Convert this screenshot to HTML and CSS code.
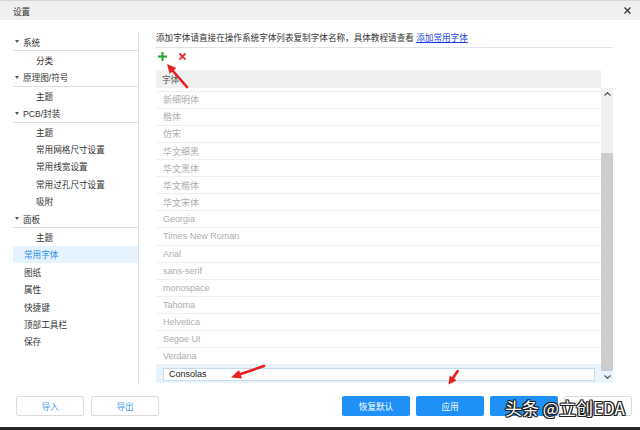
FILE: index.html
```html
<!DOCTYPE html>
<html lang="zh-CN">
<head>
<meta charset="utf-8">
<title>设置</title>
<link rel="stylesheet" href="styles.css">
</head>
<body>
<div class="window">
  <header class="titlebar">
    <span class="title">设置</span>
    <svg class="close" width="7" height="7" viewBox="0 0 7 7"><path d="M0.5 0.5L6.5 6.5M6.5 0.5L0.5 6.5"/></svg>
  </header>
  <div class="main">
    <nav class="tree">
      <div class="row group"><i class="caret"></i>系统</div>
      <div class="row child">分类</div>
      <div class="row group"><i class="caret"></i>原理图/符号</div>
      <div class="row child">主题</div>
      <div class="row group"><i class="caret"></i>PCB/封装</div>
      <div class="row child">主题</div>
      <div class="row child">常用网格尺寸设置</div>
      <div class="row child">常用线宽设置</div>
      <div class="row child">常用过孔尺寸设置</div>
      <div class="row child">吸附</div>
      <div class="row group"><i class="caret"></i>面板</div>
      <div class="row child">主题</div>
      <div class="row leaf active">常用字体</div>
      <div class="row leaf">图纸</div>
      <div class="row leaf">属性</div>
      <div class="row leaf">快捷键</div>
      <div class="row leaf">顶部工具栏</div>
      <div class="row leaf">保存</div>
    </nav>
    <section class="content">
      <div class="hint">添加字体请直接在操作系统字体列表复制字体名称，具体教程请查看 <a href="#">添加常用字体</a></div>
      <div class="toolbar">
        <svg class="icon-add" width="9" height="9" viewBox="0 0 9 9"><path d="M4.5 0V9M0 4.5H9"/></svg>
        <svg class="icon-del" width="7" height="7" viewBox="0 0 7 7"><path d="M0.5 0.5L6.5 6.5M6.5 0.5L0.5 6.5"/></svg>
      </div>
      <div class="table">
        <div class="thead"><div class="th">字体</div><div class="th-gap"></div></div>
        <div class="tbody">
          <div class="rows">
            <div class="cut"></div>
            <div class="td">新细明体</div>
            <div class="td">楷体</div>
            <div class="td">仿宋</div>
            <div class="td">华文细黑</div>
            <div class="td">华文黑体</div>
            <div class="td">华文楷体</div>
            <div class="td">华文宋体</div>
            <div class="td">Georgia</div>
            <div class="td">Times New Roman</div>
            <div class="td">Arial</div>
            <div class="td">sans-serif</div>
            <div class="td">monospace</div>
            <div class="td">Tahoma</div>
            <div class="td">Helvetica</div>
            <div class="td">Segoe UI</div>
            <div class="td">Verdana</div>
            <div class="td edit"><input class="font-input" type="text" value="Consolas"></div>
          </div>
          <div class="scrollbar">
            <div class="sb-btn"><svg width="7" height="4" viewBox="0 0 7 4"><path d="M0.5 3.5L3.5 0.7L6.5 3.5"/></svg></div>
            <div class="sb-track"><div class="sb-thumb"></div></div>
            <div class="sb-btn sb-down"><svg width="7" height="4" viewBox="0 0 7 4"><path d="M0.5 0.5L3.5 3.3L6.5 0.5"/></svg></div>
          </div>
        </div>
      </div>
    </section>
  </div>
  <footer class="footer">
    <div class="btn-group left">
      <div class="btn btn-light">导入</div>
      <div class="btn btn-light">导出</div>
    </div>
    <div class="btn-group right">
      <div class="btn btn-primary">恢复默认</div>
      <div class="btn btn-primary">应用</div>
      <div class="btn btn-primary" aria-label="确定"></div>
      <div class="btn btn-light" aria-label="取消"></div>
    </div>
  </footer>
  <div class="taskbar"></div>
</div>
<svg class="annot" width="640" height="430" viewBox="0 0 640 430">
  <g class="arrow">
    <line x1="187" y1="87" x2="172.5" y2="70.5"/>
    <polygon points="167,64 176.3,68 169.6,73.8"/>
    <line x1="264" y1="366" x2="240" y2="374.3"/>
    <polygon points="231,377.5 242,378.4 239,369.9"/>
    <line x1="457.7" y1="371" x2="453" y2="378"/>
    <polygon points="448.5,384.5 456.6,380.5 449.6,375.5"/>
  </g>
</svg>
<div class="watermark">头条 @立创EDA</div>
</body>
</html>
```
FILE: styles.css
```css
html, body {
  margin: 0;
  padding: 0;
}
body {
  width: 640px;
  height: 430px;
  overflow: hidden;
  position: relative;
  background: #fff;
  font-family: "Liberation Sans", "Noto Sans CJK SC", sans-serif;
  font-size: 8.6px;
  color: #333;
}
.window {
  display: flex;
  flex-direction: column;
  height: 430px;
}
.titlebar {
  flex: none;
  height: 20px;
  box-sizing: border-box;
  border-top: 1px solid #d6d6d6;
  background: #efefef;
  display: flex;
  align-items: center;
  justify-content: space-between;
  padding: 0 9px 0 13px;
}
.title {
  color: #333;
}
.close path {
  stroke: #333;
  stroke-width: 1.3;
  fill: none;
}
.main {
  flex: none;
  display: flex;
  height: 353px;
  margin-top: 12px;
}
.tree {
  width: 125px;
  margin-left: 13px;
  border-right: 1px solid #dedede;
  padding-top: 1px;
}
.row {
  height: 17.4px;
  display: flex;
  align-items: center;
  white-space: nowrap;
}
.group {
  padding-left: 2px;
  border-bottom: 1px solid #dddddd;
}
.caret {
  width: 0;
  height: 0;
  border-left: 2.2px solid transparent;
  border-right: 2.2px solid transparent;
  border-top: 3.6px solid #555;
  margin-right: 4px;
}
.child {
  padding-left: 23px;
}
.leaf {
  padding-left: 11px;
}
.active {
  background: #e5f3ff;
  color: #2d8cf0;
}
.content {
  width: 457px;
  padding-left: 17px;
  display: flex;
  flex-direction: column;
}
.hint {
  height: 15px;
  line-height: 13px;
  border-bottom: 1px solid #e3e3e3;
  white-space: nowrap;
}
.hint a {
  color: #1f3fe0;
  text-decoration: underline;
}
.toolbar {
  height: 22px;
  box-sizing: border-box;
  display: flex;
  align-items: flex-start;
  padding: 4px 0 0 2px;
  gap: 12px;
}
.icon-add path {
  stroke: #22a32a;
  stroke-width: 2;
  fill: none;
}
.icon-del {
  margin-top: 1px;
}
.icon-del path {
  stroke: #e8262b;
  stroke-width: 1.8;
  fill: none;
}
.table {
  display: flex;
  flex-direction: column;
}
.thead {
  height: 18px;
  display: flex;
}
.th {
  flex: 1;
  background: #f0f0f0;
  padding-left: 6px;
  display: flex;
  align-items: center;
  color: #555;
}
.th-gap {
  width: 12px;
}
.tbody {
  height: 295px;
  display: flex;
}
.rows {
  flex: 1;
}
.cut {
  height: 3.7px;
  box-sizing: border-box;
  border-bottom: 1px solid #eeeeee;
}
.td {
  height: 17.1px;
  box-sizing: border-box;
  border-bottom: 1px solid #efefef;
  padding-left: 7px;
  display: flex;
  align-items: center;
  color: #adadad;
  font-size: 9px;
  white-space: nowrap;
}
.td.edit {
  height: 18px;
  border-bottom: none;
  background: #e7f4fd;
}
.font-input {
  width: 432px;
  height: 13px;
  box-sizing: border-box;
  margin: 0;
  border: 1px solid #c9dbeb;
  padding: 0 0 0 5px;
  font-family: "Liberation Sans", sans-serif;
  font-size: 9px;
  color: #222;
  background: #fff;
  outline: none;
}
.scrollbar {
  width: 12px;
  display: flex;
  flex-direction: column;
  background: #f0f0f0;
}
.sb-btn {
  height: 11px;
  flex: none;
  display: flex;
  align-items: center;
  justify-content: center;
}
.sb-btn path {
  stroke: #555;
  stroke-width: 1.2;
  fill: none;
}
.sb-down {
  height: 11.6px;
  background: #e7f4fd;
}
.sb-track {
  flex: 1;
  padding-top: 53.7px;
  display: flex;
}
.sb-thumb {
  flex: 1;
  background: #cdcdcd;
}
.footer {
  flex: none;
  height: 42px;
  box-sizing: border-box;
  padding: 11px 8px 0 16px;
  display: flex;
  justify-content: space-between;
  align-items: flex-start;
}
.btn-group {
  display: flex;
}
.btn-group.left {
  gap: 7px;
}
.btn-group.right {
  gap: 6px;
}
.btn {
  width: 68px;
  height: 20px;
  box-sizing: border-box;
  border-radius: 2px;
  display: flex;
  align-items: center;
  justify-content: center;
}
.btn-light {
  border: 1px solid #dcdcdc;
  background: #fff;
  color: #3c9bf2;
}
.btn-primary {
  background: #1e90f8;
  color: #fff;
}
.taskbar {
  flex: none;
  height: 3px;
  background: #262626;
}
.annot {
  position: absolute;
  left: 0;
  top: 0;
  pointer-events: none;
}
.arrow line {
  stroke: #e8201e;
  stroke-width: 2.6;
  stroke-linecap: round;
}
.arrow polygon {
  fill: #e8201e;
}
.watermark {
  position: absolute;
  left: 505px;
  top: 397px;
  font-family: "Noto Sans CJK SC", sans-serif;
  font-size: 17px;
  line-height: 22px;
  color: #fff;
  white-space: nowrap;
  text-shadow: 1px 0 0 #222, -1px 0 0 #222, 0 1px 0 #222, 0 -1px 0 #222, 1px 1px 0 #222, -1px -1px 0 #222, 1px -1px 0 #222, -1px 1px 0 #222;
}
```
